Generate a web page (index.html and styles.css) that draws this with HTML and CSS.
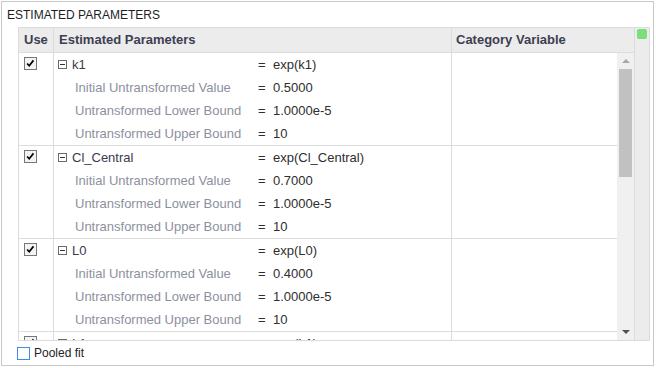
FILE: index.html
```html
<!DOCTYPE html>
<html lang="en">
<head>
  <meta charset="UTF-8">
  <title>Estimated Parameters</title>
  <link rel="stylesheet" href="styles.css">
</head>
<body>

<div class="panel">
  <div class="panelTitle">ESTIMATED PARAMETERS</div>

  <div class="grid">
    <div class="gridMain">
      <div class="head">
        <div class="cell colUse">Use</div>
        <div class="cell colParam">Estimated Parameters</div>
        <div class="cell colCat headCat">Category Variable</div>
      </div>

      <div class="scrollArea">
        <div class="rows">

          <div class="row">
            <div class="cell colUse"><span class="check on"><svg viewBox="0 0 13 13"><path d="M2.5 6.5 L5 9.2 L10 2.8"/></svg></span></div>
            <div class="cell colParam">
              <div class="line"><span class="key"><span class="minus"></span><span class="name">k1</span></span><span class="eq">=</span><span class="val">exp(k1)</span></div>
              <div class="line"><span class="key sub">Initial Untransformed Value</span><span class="eq">=</span><span class="val">0.5000</span></div>
              <div class="line"><span class="key sub">Untransformed Lower Bound</span><span class="eq">=</span><span class="val">1.0000e-5</span></div>
              <div class="line"><span class="key sub">Untransformed Upper Bound</span><span class="eq">=</span><span class="val">10</span></div>
            </div>
            <div class="cell colCat"></div>
          </div>

          <div class="row">
            <div class="cell colUse"><span class="check on"><svg viewBox="0 0 13 13"><path d="M2.5 6.5 L5 9.2 L10 2.8"/></svg></span></div>
            <div class="cell colParam">
              <div class="line"><span class="key"><span class="minus"></span><span class="name">Cl_Central</span></span><span class="eq">=</span><span class="val">exp(Cl_Central)</span></div>
              <div class="line"><span class="key sub">Initial Untransformed Value</span><span class="eq">=</span><span class="val">0.7000</span></div>
              <div class="line"><span class="key sub">Untransformed Lower Bound</span><span class="eq">=</span><span class="val">1.0000e-5</span></div>
              <div class="line"><span class="key sub">Untransformed Upper Bound</span><span class="eq">=</span><span class="val">10</span></div>
            </div>
            <div class="cell colCat"></div>
          </div>

          <div class="row">
            <div class="cell colUse"><span class="check on"><svg viewBox="0 0 13 13"><path d="M2.5 6.5 L5 9.2 L10 2.8"/></svg></span></div>
            <div class="cell colParam">
              <div class="line"><span class="key"><span class="minus"></span><span class="name">L0</span></span><span class="eq">=</span><span class="val">exp(L0)</span></div>
              <div class="line"><span class="key sub">Initial Untransformed Value</span><span class="eq">=</span><span class="val">0.4000</span></div>
              <div class="line"><span class="key sub">Untransformed Lower Bound</span><span class="eq">=</span><span class="val">1.0000e-5</span></div>
              <div class="line"><span class="key sub">Untransformed Upper Bound</span><span class="eq">=</span><span class="val">10</span></div>
            </div>
            <div class="cell colCat"></div>
          </div>

          <div class="row">
            <div class="cell colUse"><span class="check on"><svg viewBox="0 0 13 13"><path d="M2.5 6.5 L5 9.2 L10 2.8"/></svg></span></div>
            <div class="cell colParam">
              <div class="line"><span class="key"><span class="minus"></span><span class="name">L1</span></span><span class="eq">=</span><span class="val">exp(L1)</span></div>
            </div>
            <div class="cell colCat"></div>
          </div>

        </div>

        <div class="vscroll">
          <span class="arrowUp"></span>
          <span class="thumb"></span>
          <span class="arrowDown"></span>
        </div>
      </div>
    </div>

    <div class="sideStrip">
      <span class="status"></span>
    </div>
  </div>

  <div class="footer">
    <span class="check pooled"></span>
    <span class="footerLabel">Pooled fit</span>
  </div>
</div>

</body>
</html>
```

FILE: styles.css
```css
body {
  margin: 0;
  font-family: "Liberation Sans", Arial, sans-serif;
  background: #ffffff;
}
.panel {
  box-sizing: border-box;
  width: 653px;
  height: 365px;
  margin: 1px 0 0 1px;
  border: 1px solid #c8c8c8;
  display: flex;
  flex-direction: column;
}
.panelTitle {
  height: 25px;
  line-height: 26px;
  padding-left: 5px;
  font-size: 12px;
  color: #1e1e1e;
}
.grid {
  box-sizing: border-box;
  display: flex;
  width: 632px;
  height: 314px;
  margin-left: 16px;
  border: 1px solid #dcdcdc;
}
.gridMain {
  width: 615px;
  display: flex;
  flex-direction: column;
}
.head {
  display: flex;
  height: 24px;
  background: #ececec;
  border-bottom: 1px solid #dcdcdc;
  font-weight: bold;
  font-size: 13px;
  color: #3e3e52;
  line-height: 24px;
}
.cell {
  box-sizing: border-box;
}
.colUse {
  width: 35px;
  padding-left: 5px;
  border-right: 1px solid #dcdcdc;
}
.colParam {
  width: 398px;
  padding-left: 5px;
  border-right: 1px solid #dcdcdc;
}
.colCat {
  flex: 1;
  padding-left: 4px;
}
.head .colParam {
  padding-left: 5px;
}
.headCat {
  padding-left: 4px;
}
.scrollArea {
  display: flex;
  height: 287px;
}
.rows {
  width: 598px;
  overflow: hidden;
}
.row {
  display: flex;
  border-bottom: 1px solid #dcdcdc;
}
.row .colParam {
  padding-left: 4px;
}
.line {
  display: flex;
  height: 23px;
  line-height: 23px;
  font-size: 13px;
  color: #2e2e2e;
}
.key {
  width: 200px;
  display: flex;
  align-items: center;
}
.key.sub {
  padding-left: 17px;
  box-sizing: border-box;
  color: #8c909e;
}
.minus {
  box-sizing: border-box;
  width: 9px;
  height: 9px;
  border: 1px solid #6a6a6a;
  position: relative;
  margin-right: 5px;
}
.minus::after {
  content: "";
  position: absolute;
  left: 1px;
  right: 1px;
  top: 3px;
  height: 1px;
  background: #333333;
}
.name {
  color: #3a3a4c;
}
.eq {
  width: 15px;
}
.val {
  color: #2e2e2e;
}
.check {
  box-sizing: border-box;
  display: inline-block;
  width: 13px;
  height: 13px;
  border: 1px solid #777777;
  background: #f3f3f3;
  margin-top: 4px;
  vertical-align: top;
}
.check svg {
  display: block;
  width: 11px;
  height: 11px;
  fill: none;
  stroke: #000000;
  stroke-width: 2;
}
.vscroll {
  width: 17px;
  background: #f0f0f0;
  display: flex;
  flex-direction: column;
  align-items: center;
}
.arrowUp {
  width: 0;
  height: 0;
  margin-top: 6px;
  border-left: 4px solid transparent;
  border-right: 4px solid transparent;
  border-bottom: 4px solid #a6a6a6;
}
.thumb {
  width: 13px;
  height: 108px;
  margin-top: 6px;
  background: #c1c1c1;
}
.arrowDown {
  width: 0;
  height: 0;
  margin-top: auto;
  margin-bottom: 6px;
  border-left: 4px solid transparent;
  border-right: 4px solid transparent;
  border-top: 4px solid #505050;
}
.sideStrip {
  flex: 1;
  background: #ececec;
  border-left: 1px solid #dcdcdc;
  padding: 1px 0 0 2px;
}
.status {
  display: block;
  width: 10px;
  height: 10px;
  border-radius: 2px;
  background: #7ade7a;
}
.footer {
  display: flex;
  align-items: center;
  padding: 5px 0 0 15px;
}
.check.pooled {
  margin-top: 0;
  background: #ffffff;
  border-color: #3b8de6;
}
.footerLabel {
  margin-left: 4px;
  font-size: 12px;
  color: #222222;
}
```
